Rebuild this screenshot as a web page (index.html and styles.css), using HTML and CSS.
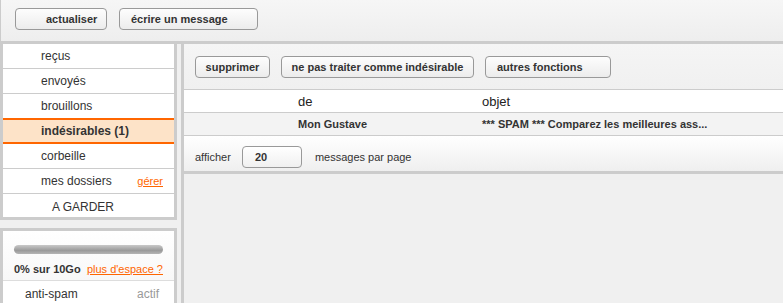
FILE: index.html
```html
<!DOCTYPE html>
<html lang="fr">
<head>
  <meta charset="UTF-8">
  <title>Messagerie - indésirables</title>
  <link rel="stylesheet" href="styles.css">
</head>
<body>
  <div class="topbar">
    <button class="btn btn-refresh">actualiser</button>
    <button class="btn btn-write">écrire un message</button>
  </div>

  <div class="main">
    <div class="sidebar">
      <div class="side-box folders">
        <div class="folder">reçus</div>
        <div class="folder">envoyés</div>
        <div class="folder">brouillons</div>
        <div class="folder active">indésirables (1)</div>
        <div class="folder">corbeille</div>
        <div class="folder folder-mine">
          <span>mes dossiers</span>
          <a href="#" class="orange-link">gérer</a>
        </div>
        <div class="folder sub">A GARDER</div>
      </div>

      <div class="side-box quota">
        <div class="quota-inner">
          <div class="quota-bar"></div>
          <div class="quota-text">
            <b>0% sur 10Go</b>
            <a href="#" class="orange-link">plus d'espace ?</a>
          </div>
        </div>
        <div class="antispam">
          <span>anti-spam</span>
          <span class="muted">actif</span>
        </div>
      </div>
    </div>

    <div class="content">
      <div class="toolbar">
        <button class="btn btn-delete">supprimer</button>
        <button class="btn btn-notspam">ne pas traiter comme indésirable</button>
        <button class="btn btn-more">autres fonctions</button>
      </div>

      <div class="mail-table">
        <div class="mail-row head">
          <span class="col-from">de</span>
          <span class="col-subject">objet</span>
        </div>
        <div class="mail-row msg">
          <span class="col-from">Mon Gustave</span>
          <span class="col-subject">*** SPAM *** Comparez les meilleures ass...</span>
        </div>
      </div>

      <div class="pager">
        <span>afficher</span>
        <div class="per-page">20</div>
        <span>messages par page</span>
      </div>
    </div>
  </div>
</body>
</html>
```

FILE: styles.css
```css
body {
  margin: 0;
  width: 783px;
  height: 303px;
  overflow: hidden;
  background: #f0f0f0;
  font-family: 'Liberation Sans', Arial, sans-serif;
  color: #333;
}
.btn {
  height: 22px;
  border: 1px solid #999;
  border-radius: 4px;
  background: linear-gradient(to bottom, #fdfdfd, #ececec);
  font-family: 'Liberation Sans', Arial, sans-serif;
  font-size: 11px;
  font-weight: bold;
  color: #333;
  padding: 0;
  box-sizing: border-box;
  cursor: pointer;
}
.topbar {
  height: 44px;
  box-sizing: border-box;
  border-left: 1px solid #ccc;
  border-bottom: 3px solid #ccc;
  background: linear-gradient(to bottom, #f6f6f6, #eeeeee);
  display: flex;
  gap: 12px;
  padding: 8px 0 0 14px;
}
.btn-refresh {
  width: 92px;
  text-align: left;
  padding-left: 30px;
}
.btn-write {
  width: 139px;
  text-align: left;
  padding-left: 11px;
}
.main {
  display: flex;
  gap: 4px;
}
.sidebar {
  width: 177px;
  display: flex;
  flex-direction: column;
  gap: 8px;
}
.side-box {
  border: 3px solid #ccc;
  background: #fff;
}
.folders {
  border-top: 0;
}
.folder {
  height: 24px;
  line-height: 24px;
  border-bottom: 1px solid #ccc;
  padding-left: 38px;
  font-size: 12px;
  color: #333;
}
.folder.active {
  margin-top: -1px;
  height: 22px;
  line-height: 22px;
  border-top: 2px solid #ff6600;
  border-bottom: 2px solid #ff6600;
  background: #fde3c8;
  font-weight: bold;
}
.folder-mine {
  display: flex;
  justify-content: space-between;
  padding-right: 11px;
}
.folder.sub {
  border-bottom: 0;
  height: 20px;
  line-height: 20px;
  padding-top: 3px;
  padding-left: 49px;
}
.orange-link {
  color: #ff6600;
  font-size: 11px;
}
.quota {
  background: linear-gradient(to bottom, #fff, #f3f3f3);
}
.quota-inner {
  padding: 14px 11px 4px;
  border-bottom: 1px solid #ddd;
}
.quota-bar {
  height: 9px;
  border-radius: 5px;
  background: linear-gradient(to bottom, #c8c8c8, #9a9a9a 60%, #b5b5b5);
}
.quota-text {
  margin-top: 8px;
  line-height: 14px;
  font-size: 11px;
  display: flex;
  justify-content: space-between;
}
.antispam {
  display: flex;
  justify-content: space-between;
  padding: 6px 15px 0 22px;
  font-size: 12px;
  background: #fff;
  height: 24px;
}
.muted {
  color: #999;
}
.content {
  flex: 1;
  border-left: 3px solid #ccc;
}
.toolbar {
  height: 45px;
  box-sizing: border-box;
  padding: 12px 0 0 11px;
  display: flex;
  gap: 11px;
  background: linear-gradient(to bottom, #f5f5f5, #f0f0f0);
}
.btn-delete {
  width: 75px;
}
.btn-notspam {
  width: 193px;
}
.btn-more {
  width: 126px;
  text-align: left;
  padding-left: 11px;
}
.mail-row {
  display: flex;
  border-top: 1px solid #ccc;
  height: 22px;
  align-items: center;
}
.mail-row.head {
  background: #fff;
  font-size: 13px;
  color: #222;
}
.mail-row.msg {
  background: #f3f3f3;
  font-size: 11px;
  font-weight: bold;
  border-bottom: 1px solid #ccc;
}
.col-from {
  width: 184px;
  padding-left: 114px;
}
.pager {
  height: 38px;
  box-sizing: border-box;
  border-bottom: 3px solid #ccc;
  background: linear-gradient(to bottom, #fff, #efefef);
  display: flex;
  align-items: center;
  padding: 6px 0 0 11px;
  font-size: 11px;
}
.per-page {
  width: 60px;
  height: 22px;
  box-sizing: border-box;
  margin: 0 13px 0 11px;
  border: 1px solid #999;
  border-radius: 4px;
  background: linear-gradient(to bottom, #fff, #f0f0f0);
  font-weight: bold;
  line-height: 20px;
  padding-left: 12px;
}
```
